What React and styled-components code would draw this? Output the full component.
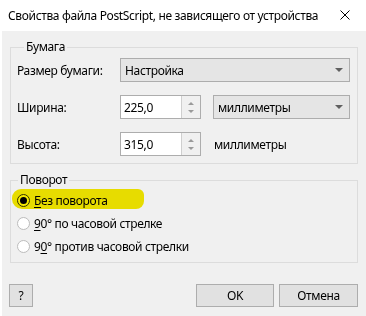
import React from 'react';
import styled, { createGlobalStyle } from 'styled-components';

const GlobalStyle = createGlobalStyle`
  html, body {
    margin: 0;
    padding: 0;
    background: #ffffff;
  }
  * {
    box-sizing: border-box;
  }
`;

const Window = styled.div`
  width: 366px;
  height: 316px;
  background: #ffffff;
  font-family: "Noto Sans", "Open Sans", sans-serif;
  font-size: 12px;
  letter-spacing: -0.35px;
  color: #000;
  display: flex;
  flex-direction: column;
  overflow: hidden;
`;

const TitleBar = styled.div`
  height: 31px;
  display: flex;
  align-items: center;
  padding-left: 8px;
  padding-bottom: 1px;
`;

const Title = styled.div`
  flex: 1;
  white-space: nowrap;
  font-size: 12px;
`;

const CloseButton = styled.div`
  width: 46px;
  height: 31px;
  display: flex;
  align-items: center;
  justify-content: center;
  margin-right: -2px;
`;

const Body = styled.div`
  flex: 1;
  margin-left: 2px;
  background: #f0f0f0;
  padding: 8px 8px 0 8px;
  display: flex;
  flex-direction: column;
`;

const Group = styled.fieldset`
  margin: 0 0 8px 0;
  border: 1px solid #dcdcdc;
  padding: ${p => p.$pad};
  min-width: 0;
`;

const Legend = styled.legend`
  padding: 0 2px;
  margin-left: 7px;
  line-height: 16px;
`;

const Row = styled.div`
  display: flex;
  align-items: center;
  height: 24px;
  margin-bottom: ${p => p.$last ? '0' : '13px'};
`;

const Label = styled.div`
  width: 103px;
`;

const Select = styled.div`
  width: ${p => p.$w}px;
  height: ${p => p.$h || 24}px;
  background: #e5e5e5;
  border: 1px solid #adadad;
  display: flex;
  align-items: center;
  justify-content: space-between;
  padding: 0 6px 0 4px;
  margin-left: ${p => p.$ml || 0}px;
`;

const Arrow = styled.span`
  width: 0;
  height: 0;
  border-left: 4px solid transparent;
  border-right: 4px solid transparent;
  border-top: 4px solid #606060;
`;

const Spin = styled.div`
  display: flex;
  height: 24px;
  width: 81px;
  border: 1px solid #adadad;
  background: #fff;
`;

const SpinInput = styled.div`
  flex: 1;
  display: flex;
  align-items: center;
  padding-left: 3px;
`;

const SpinButtons = styled.div`
  width: 19px;
  border-left: 1px solid #cfcfcf;
  background: #f0f0f0;
  display: flex;
  flex-direction: column;
  align-items: center;
  justify-content: space-around;
  padding: 3px 0;
`;

const Tri = styled.span`
  width: 0;
  height: 0;
  border-left: 3px solid transparent;
  border-right: 3px solid transparent;
  ${p => p.$up ? 'border-bottom: 3px solid #9a9a9a;' : 'border-top: 3px solid #9a9a9a;'}
`;

const Units = styled.div`
  margin-left: 13px;
`;

const RadioRow = styled.label`
  position: relative;
  display: flex;
  align-items: center;
  height: 23px;
  padding-left: 6px;
`;

const Highlight = styled.span`
  position: absolute;
  left: 1px;
  top: 0px;
  width: 132px;
  height: 20px;
  background: #f6ea00;
  border-radius: 9px 6px 8px 10px;
  mix-blend-mode: multiply;
  pointer-events: none;
`;

const RadioCircle = styled.span`
  width: 13px;
  height: 13px;
  border-radius: 50%;
  border: 1px solid ${p => p.$on ? '#333' : '#bcbcbc'};
  background: #fff;
  display: flex;
  align-items: center;
  justify-content: center;
  margin-right: 4px;
  &::after {
    content: '';
    display: ${p => p.$on ? 'block' : 'none'};
    width: 7px;
    height: 7px;
    border-radius: 50%;
    background: #000;
  }
`;

const Key = styled.span`
  text-decoration: underline;
  text-underline-offset: 2px;
`;

const ButtonBar = styled.div`
  display: flex;
  align-items: center;
  margin-top: 13px;
  margin-left: -1px;
`;

const Button = styled.div`
  width: ${p => p.$w}px;
  height: 23px;
  background: #e1e1e1;
  border: 1px solid #adadad;
  display: flex;
  align-items: center;
  justify-content: center;
  margin-left: ${p => p.$ml || 0}px;
`;

const Spacer = styled.div`
  flex: 1;
`;

function SpinBox({ value }) {
  return (
    <Spin>
      <SpinInput>{value}</SpinInput>
      <SpinButtons>
        <Tri $up />
        <Tri />
      </SpinButtons>
    </Spin>
  );
}

function Radio({ on, children, highlight }) {
  return (
    <RadioRow>
      <RadioCircle $on={on} />
      <span>{children}</span>
      {highlight && <Highlight />}
    </RadioRow>
  );
}

export default function App() {
  return (
    <Window>
      <GlobalStyle />
      <TitleBar>
        <Title>Свойства файла PostScript, не зависящего от устройства</Title>
        <CloseButton>
          <svg width="10" height="10" viewBox="0 0 10 10">
            <path d="M0.5 0.5 L9.5 9.5 M9.5 0.5 L0.5 9.5" stroke="#000" strokeWidth="1" fill="none" />
          </svg>
        </CloseButton>
      </TitleBar>
      <Body>
        <Group $pad="3px 7px 7px 6px">
          <Legend>Бумага</Legend>
          <Row>
            <Label>Размер бумаги:</Label>
            <Select $w={230}>
              <span>Настройка</span>
              <Arrow />
            </Select>
          </Row>
          <Row>
            <Label>Ширина:</Label>
            <SpinBox value="225,0" />
            <Select $w={137} $ml={12}>
              <span>миллиметры</span>
              <Arrow />
            </Select>
          </Row>
          <Row $last>
            <Label>Высота:</Label>
            <SpinBox value="315,0" />
            <Units>миллиметры</Units>
          </Row>
        </Group>
        <Group $pad="1px 7px 4px 0">
          <Legend>Поворот</Legend>
          <Radio on highlight><Key>Б</Key>ез поворота</Radio>
          <Radio><Key>9</Key>0° по часовой стрелке</Radio>
          <Radio>9<Key>0</Key>° против часовой стрелки</Radio>
        </Group>
        <ButtonBar>
          <Button $w={24}>?</Button>
          <Spacer />
          <Button $w={78}>OK</Button>
          <Button $w={79} $ml={5}>Отмена</Button>
        </ButtonBar>
      </Body>
    </Window>
  );
}
